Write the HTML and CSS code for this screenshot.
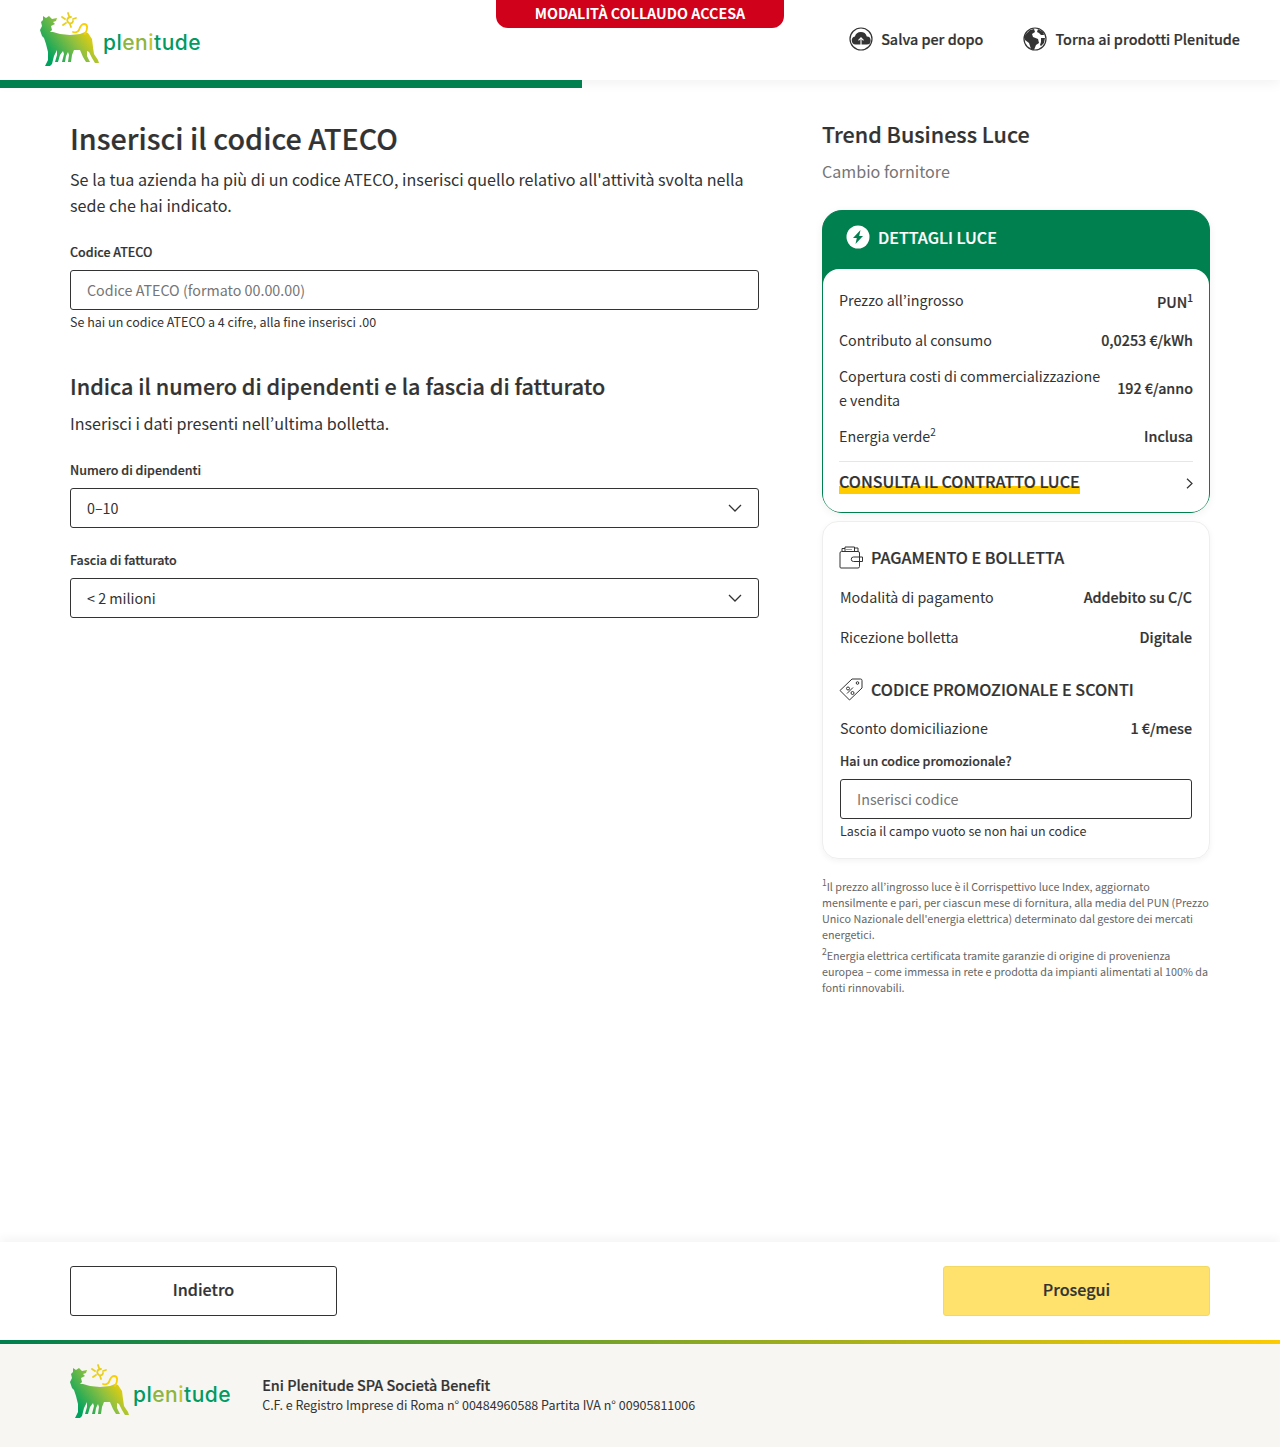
FILE: index.html
```html
<!DOCTYPE html>
<html lang="it">
<head>
<meta charset="utf-8">
<title>Plenitude</title>
<link rel="stylesheet" href="styles.css">
</head>
<body>
<svg class="defs" width="0" height="0" aria-hidden="true">
  <defs>
    <linearGradient id="dog" x1="0.9" y1="0.25" x2="0.1" y2="0.75">
      <stop offset="0" stop-color="#ffd200"/>
      <stop offset="0.45" stop-color="#8fc040"/>
      <stop offset="1" stop-color="#00a35e"/>
    </linearGradient>
    <symbol id="dogmark" viewBox="0 0 60 56">
      <path fill="url(#dog)" d="M3 4L6 6L9 4L12 7L17 6L16 9L13 10L15 12L11 14L12 18L10 20L13 20L20 22L30 23L40 22L45 20L48 21L52 27L53 35L54 42L58 48L59 51L55 51L52 46L49 40L47 39L47 44L50 50L46 50L43 45L40 38L34 38L32 43L31 50L28 50L29 43L28 40L26 44L25 50L22 50L24 42L23 39L20 43L18 50L15 50L17 43L17 38L14 44L12 52L10 54L5 54L8 48L8 40L6 32L4 26L2 24L0 18L2 14L1 10L3 8Z"/>
      <path fill="none" stroke="#f7cf0a" stroke-width="1.8" stroke-linecap="round" d="M45 22C48 17 48 12 44 12C41 12 40 15 39 18C38 20 35 21 33 20"/>
      <path fill="none" stroke="#e8cf1c" stroke-width="1.800" stroke-linecap="round" d="M31 5C27 5 26 9 29 11C32 12 33 10 33 9M29 4L28 1M25 7L22 5M26 11L23 13M30 12L31 15M33 7L36 6"/>
    </symbol>
  </defs>
</svg>

<header class="topbar">
  <a class="logo">
    <svg class="logo-mark" width="60" height="56"><use href="#dogmark"/></svg>
    <span class="logo-word">pl<span class="w-olive">en</span><span class="w-yellow">i</span>tude</span>
  </a>
  <div class="test-flag">MODALITÀ COLLAUDO ACCESA</div>
  <nav class="top-links">
    <a class="top-link">
      <svg width="24" height="24" viewBox="0 0 24 24"><circle cx="12" cy="12" r="11" fill="#fff" stroke="#333" stroke-width="1.2"/><path fill="#333" d="M6.500 17.500a4 4 0 0 1-.6-7.900A6.200 6.200 0 0 1 17.800 9.500a4 4 0 0 1-.3 8z"/><path fill="none" stroke="#fff" stroke-width="1.100" d="M12 20v-9M9.500 13.300L12 10.800l2.500 2.500"/></svg>
      <span>Salva per dopo</span>
    </a>
    <a class="top-link">
      <svg width="24" height="24" viewBox="0 0 24 24"><circle cx="12" cy="12" r="11" fill="#fff" stroke="#333" stroke-width="1.2"/><path fill="#333" d="M3 7l4-4 4-1 1 3-3 2 1 3 5 2 1 4-3 2-2 5-3-1-2-6-4-3-1-3zM15 2l5 3 1 3-3 0-2-2-2-1zM18 11l4 0-1 5-3 3-1-1 1-3z"/></svg>
      <span>Torna ai prodotti Plenitude</span>
    </a>
  </nav>
</header>
<div class="progress"><div class="progress-fill" style="width:582px"></div></div>

<main class="content">
  <section class="form-col">
    <h1>Inserisci il codice ATECO</h1>
    <p class="lead">Se la tua azienda ha più di un codice ATECO, inserisci quello relativo all'attività svolta nella sede che hai indicato.</p>
    <div class="field field-ateco">
      <label class="field-label">Codice ATECO</label>
      <div class="input placeholder">Codice ATECO (formato 00.00.00)</div>
      <div class="hint">Se hai un codice ATECO a 4 cifre, alla fine inserisci .00</div>
    </div>
    <h2>Indica il numero di dipendenti e la fascia di fatturato</h2>
    <p class="lead">Inserisci i dati presenti nell’ultima bolletta.</p>
    <div class="field field-emp">
      <label class="field-label">Numero di dipendenti</label>
      <div class="input select"><span>0–10</span>
        <svg width="14" height="8" viewBox="0 0 14 8"><path fill="none" stroke="#333" stroke-width="1.300" d="M1 1l6 6 6-6"/></svg></div>
    </div>
    <div class="field field-rev">
      <label class="field-label">Fascia di fatturato</label>
      <div class="input select"><span>&lt; 2 milioni</span>
        <svg width="14" height="8" viewBox="0 0 14 8"><path fill="none" stroke="#333" stroke-width="1.300" d="M1 1l6 6 6-6"/></svg></div>
    </div>
  </section>

  <aside class="summary-col">
    <h3 class="offer">Trend Business Luce</h3>
    <p class="offer-sub">Cambio fornitore</p>

    <div class="card-green">
      <div class="card-green-head">
        <svg width="24" height="24" viewBox="0 0 24 24"><circle cx="12" cy="12" r="11.500" fill="#fff"/><path fill="#00804f" d="M14.500 5l-7.500 8h3.800l-1.300 6 7.500-8h-3.800z"/></svg>
        <span>DETTAGLI LUCE</span>
      </div>
      <div class="card-green-body">
        <div class="row row-first"><span>Prezzo all’ingrosso</span><strong class="pun">PUN<sup>1</sup></strong></div>
        <div class="row"><span>Contributo al consumo</span><strong>0,0253 €/kWh</strong></div>
        <div class="row"><span class="row-wrap">Copertura costi di commercializzazione e vendita</span><strong>192 €/anno</strong></div>
        <div class="row"><span>Energia verde<sup>2</sup></span><strong>Inclusa</strong></div>
        <a class="contract">
          <span class="contract-text">CONSULTA IL CONTRATTO LUCE</span>
          <svg width="7" height="11" viewBox="0 0 7 11"><path fill="none" stroke="#333" stroke-width="1.200" d="M1 .8l5 4.700-5 4.700"/></svg>
        </a>
      </div>
    </div>

    <div class="card-plain">
      <div class="sec-head">
        <svg width="24" height="24" viewBox="0 0 24 24" fill="none" stroke="#333" stroke-width="1"><path d="M2 23h17a1.500 1.500 0 0 0 1.500-1.500V8A1.500 1.500 0 0 0 19 6.500H2.500A1.500 1.500 0 0 0 1 8v14a1 1 0 0 0 1 1z"/><path d="M3 6V3.500h3V2h9.500v4M6 6V3.500M8 5V4M10 5V4M12 5V4M15.500 3H19v3.500"/><path d="M14.500 12H23.500v4.500H14.500a2.200 2.200 0 0 1 0-4.500z"/></svg>
        <span>PAGAMENTO E BOLLETTA</span>
      </div>
      <div class="row row-in"><span>Modalità di pagamento</span><strong>Addebito su C/C</strong></div>
      <div class="row row-in"><span>Ricezione bolletta</span><strong>Digitale</strong></div>
      <div class="sec-head sec-head-2">
        <svg width="24" height="24" viewBox="0 0 24 24" fill="none" stroke="#333" stroke-width="1"><path d="M1 13.500L13 2h8.500A1.500 1.500 0 0 1 23 3.500V11L10.500 23z"/><circle cx="18.500" cy="6" r="1.300"/><path d="M8 16.500l6-6"/><circle cx="9" cy="11.500" r="1.500"/><circle cx="13.500" cy="16" r="1.500"/></svg>
        <span>CODICE PROMOZIONALE E SCONTI</span>
      </div>
      <div class="row row-in row-tight"><span>Sconto domiciliazione</span><strong>1 €/mese</strong></div>
      <div class="promo">
        <label class="field-label">Hai un codice promozionale?</label>
        <div class="input placeholder">Inserisci codice</div>
        <div class="hint">Lascia il campo vuoto se non hai un codice</div>
      </div>
    </div>

    <div class="notes">
      <p><sup>1</sup>Il prezzo all’ingrosso luce è il Corrispettivo luce Index, aggiornato mensilmente e pari, per ciascun mese di fornitura, alla media del PUN (Prezzo Unico Nazionale dell'energia elettrica) determinato dal gestore dei mercati energetici.</p>
      <p><sup>2</sup>Energia elettrica certificata tramite garanzie di origine di provenienza europea – come immessa in rete e prodotta da impianti alimentati al 100% da fonti rinnovabili.</p>
    </div>
  </aside>
</main>

<div class="actions">
  <button class="btn btn-back">Indietro</button>
  <button class="btn btn-next">Prosegui</button>
</div>
<div class="rule"></div>
<footer class="footer">
  <a class="logo logo-foot">
    <svg class="logo-mark" width="60" height="56"><use href="#dogmark"/></svg>
    <span class="logo-word">pl<span class="w-olive">en</span><span class="w-yellow">i</span>tude</span>
  </a>
  <div class="legal">
    <strong>Eni Plenitude SPA Società Benefit</strong>
    <span>C.F. e Registro Imprese di Roma n° 00484960588 Partita IVA n° 00905811006</span>
  </div>
</footer>
</body>
</html>
```
FILE: styles.css
```css
* { box-sizing: border-box; }
html, body { margin: 0; padding: 0; }
body {
  font-family: "Noto Sans CJK KR", "Noto Sans", sans-serif;
  color: #333;
  background: #fff;
  font-size: 14.3px;
  line-height: 24px;
  width: 1280px;
  min-height: 1447px;
  display: flex;
  flex-direction: column;
}
.defs { position: absolute; }
h1, h2, h3, p { margin: 0; }
sup { font-size: 10px; line-height: 0; vertical-align: 6px; }

h1, h2, .offer, .card-green-head, .sec-head, .contract, .row strong, .field-label, .legal strong, .btn, .top-link {
  -webkit-text-stroke: .2px currentColor;
}

.topbar {
  height: 80px;
  display: flex;
  align-items: flex-start;
  justify-content: space-between;
  padding: 0 40px;
  position: relative;
  background: #fff;
  box-shadow: 0 3px 12px rgba(0,0,0,.06);
}
.logo { display: flex; align-items: flex-start; }
.logo-mark { margin-top: 12px; display: block; flex: none; }
.logo-word {
  font-family: "Inter", sans-serif;
  font-weight: 500;
  font-size: 21px;
  line-height: 24px;
  letter-spacing: .5px;
  color: #009a62;
  margin: 31px 0 0 3px;
}
.w-olive { color: #8db53f; }
.w-yellow { color: #c9c52a; }
.test-flag {
  position: absolute;
  left: 496px;
  top: 0;
  width: 288px;
  height: 28px;
  background: #d0021b;
  color: #fff;
  font-weight: 700;
  font-size: 14.3px;
  line-height: 26px;
  text-align: center;
  border-radius: 0 0 12px 12px;
}
.top-links { display: flex; gap: 40px; padding-top: 27px; }
.top-link { display: flex; align-items: center; gap: 8px; font-weight: 500; font-size: 14.37px; }
.top-link svg { flex: none; }

.progress { height: 8px; position: relative; }
.progress-fill { height: 8px; background: #00804f; }

.content {
  flex: 1;
  display: flex;
  justify-content: space-between;
  padding: 0 70px;
}
.form-col { width: 689px; padding-top: 30px; }
h1 { font-size: 28.7px; line-height: 40px; font-weight: 500; }
.lead { font-size: 16.13px; line-height: 26px; margin-top: 8px; }
.field-label { display: block; font-size: 12.5px; line-height: 20px; font-weight: 500; }
.field-ateco { margin-top: 24px; }
.input {
  height: 40px;
  border: 1px solid #333;
  border-radius: 3px;
  margin-top: 8px;
  padding: 0 16px 1px;
  display: flex;
  align-items: center;
  font-size: 14.3px;
  background: #fff;
}
.placeholder { color: #757575; }
.select { justify-content: space-between; }
.hint { font-size: 12.5px; line-height: 20px; margin-top: 2px; }
h2 { font-size: 21.6px; line-height: 32px; font-weight: 500; margin-top: 38px; }
.field-emp { margin-top: 24px; }
.field-rev { margin-top: 22px; }

.summary-col { width: 388px; padding-top: 30px; }
.offer { font-size: 21.5px; line-height: 32px; font-weight: 500; }
.offer-sub { font-size: 16.1px; line-height: 26px; color: #757575; margin-top: 8px; }

.card-green {
  margin-top: 26px;
  background: #00804f;
  border: 1px solid #00804f;
  border-radius: 20px;
  box-shadow: 0 2px 8px rgba(0,0,0,.06);
}
.card-green-head {
  height: 58px;
  display: flex;
  align-items: center;
  gap: 8px;
  padding: 0 23px 6px;
  color: #fff;
  font-size: 16.1px;
  font-weight: 500;
}
.card-green-body {
  background: #fff;
  border-radius: 16px 16px 18px 18px;
  padding: 15px 16px 0;
  display: flex;
  flex-direction: column;
  gap: 12px;
}
.row { display: flex; justify-content: space-between; align-items: center; gap: 16px; }
.row strong { font-weight: 500; white-space: nowrap; }
.row-wrap { width: 264px; }
.pun { line-height: 28px; padding-top: 4px; }
.contract {
  display: flex;
  align-items: flex-start;
  justify-content: space-between;
  border-top: 1px solid #e6e6e6;
  margin-top: 1px;
  height: 51px;
  padding-top: 9px;
  font-size: 16.1px;
  font-weight: 500;
}
.contract svg { margin-top: 7px; }
.contract-text {
  line-height: 20px;
  height: 23px;
  background: linear-gradient(transparent 15px, #ffcc00 15px);
}

.card-plain {
  margin-top: 8px;
  padding: 0 17px 15px;
  height: 338px;
  border: 1px solid #eee;
  border-radius: 16px;
  box-shadow: 0 2px 6px rgba(0,0,0,.05);
  display: flex;
  flex-direction: column;
}
.sec-head {
  display: flex;
  align-items: center;
  gap: 8px;
  margin-top: 23px;
  font-size: 16.1px;
  font-weight: 500;
  line-height: 24px;
}
.sec-head svg { margin-left: -1px; }
.sec-head-2 { margin-top: 28px; }
.row-in { margin-top: 16px; }
.row-in.row-tight { margin-top: 15px; }
.promo { margin-top: 11px; }
.promo .input { margin-top: 8px; }
.promo .hint { margin-top: 2px; }

.notes { margin-top: 20px; font-size: 10.75px; line-height: 16px; color: #666; }
.notes p + p { margin-top: 5px; }
.notes sup { font-size: 8.500px; vertical-align: 5px; }

.actions {
  height: 98px;
  display: flex;
  justify-content: space-between;
  align-items: center;
  padding: 0 70px;
  box-shadow: 0 -3px 10px rgba(0,0,0,.05);
  position: relative;
}
.btn {
  width: 267px;
  height: 50px;
  border-radius: 3px;
  font-family: inherit;
  font-size: 16.1px;
  font-weight: 500;
  color: #333;
  padding-bottom: 5px;
}
.btn-back { background: #fff; border: 1px solid #333; }
.btn-next { background: #ffe26d; border: 1px solid #f2d964; }
.rule { height: 4px; background: linear-gradient(90deg, #00804f, #ffcc00); }
.footer {
  height: 103px;
  background: #f7f6f2;
  display: flex;
  padding: 8px 70px 0;
}
.legal {
  display: flex;
  flex-direction: column;
  margin: 23px 0 0 31px;
  font-size: 12.5px;
  line-height: 20px;
}
.legal strong { font-size: 14.4px; font-weight: 500; line-height: 20px; }
```
